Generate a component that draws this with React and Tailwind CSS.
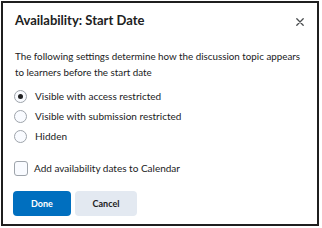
import React, { useState } from "react";

const options = [
    "Visible with access restricted",
    "Visible with submission restricted",
    "Hidden",
];

export default function App() {
    const [selected, setSelected] = useState(0);
    const [calendar, setCalendar] = useState(false);

    return (
        <div className="w-[322px] h-[228px] bg-white p-px" style={{ fontFamily: "Lato, 'Liberation Sans', sans-serif" }}>
            <div className="w-[318px] h-[225px] border-2 border-[#1f1f1f] text-[#202122] pl-3 pr-2">
                {/* Header */}
                <div className="flex items-center justify-between h-[30px] pt-[4px]">
                    <h2 className="text-[13px] font-bold leading-none">Availability: Start Date</h2>
                    <button className="mr-[5px] mt-[3px] text-[#494c4e]">
                        <svg width="8" height="8" viewBox="0 0 10 10" fill="none" stroke="currentColor" strokeWidth="1.6" strokeLinecap="round">
                            <path d="M1 1L9 9M9 1L1 9" />
                        </svg>
                    </button>
                </div>

                {/* Description */}
                <p className="mt-[15px] text-[9.8px] leading-[16px]">
                    The following settings determine how the discussion topic appears to learners before the start date
                </p>

                {/* Radio options */}
                <div className="mt-[10px] flex flex-col gap-[7px] -ml-px">
                    {options.map((label, index) => (
                        <label key={index} className="flex items-center gap-[8px] h-[13px] text-[10px] cursor-pointer" onClick={() => setSelected(index)}>
                            <span className="w-[13px] h-[13px] rounded-full border border-[#9ea4ab] bg-[#f9fbff] flex items-center justify-center">
                                {selected === index && <span className="w-[5px] h-[5px] rounded-full bg-[#202122]" />}
                            </span>
                            {label}
                        </label>
                    ))}
                </div>

                {/* Calendar checkbox */}
                <label className="mt-[18px] flex items-center gap-[6px] h-[15px] text-[10px] cursor-pointer -ml-px" onClick={() => setCalendar(!calendar)}>
                    <span className="w-[14px] h-[15px] rounded-[3px] border border-[#9ea4ab] bg-[#f9fbff]" />
                    Add availability dates to Calendar
                </label>

                {/* Buttons */}
                <div className="mt-[15px] flex gap-[4px] -ml-[2px]">
                    <button className="w-[58px] h-[25px] rounded-[4px] bg-[#006fbf] text-white text-[9px] font-bold">Done</button>
                    <button className="w-[62px] h-[25px] rounded-[4px] bg-[#e3e9f1] text-[#202122] text-[9px] font-bold">Cancel</button>
                </div>
            </div>
        </div>
    );
}
